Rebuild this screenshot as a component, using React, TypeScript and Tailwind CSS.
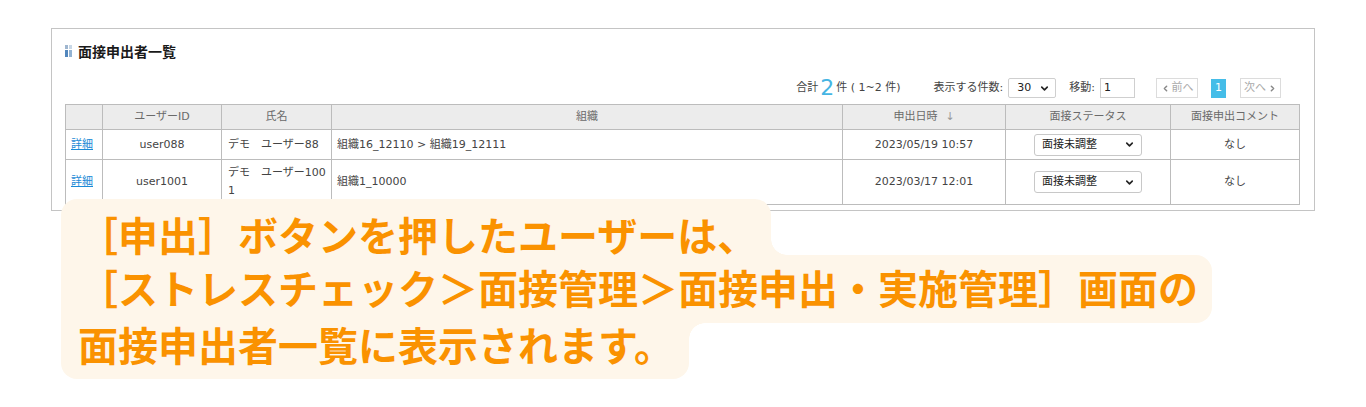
import { ChevronDown, ChevronLeft, ChevronRight } from 'lucide-react';

const rows = [
  { id: 'user088', name: 'デモ　ユーザー88', org: '組織16_12110 > 組織19_12111', date: '2023/05/19 10:57', h: 'h-[30px]' },
  { id: 'user1001', name: 'デモ　ユーザー1001', org: '組織1_10000', date: '2023/03/17 12:01', h: 'h-[44px]' },
];

const heads = ['', 'ユーザーID', '氏名', '組織', '申出日時', '面接ステータス', '面接申出コメント'];
const widths = ['w-[37px]', 'w-[119px]', 'w-[110px]', 'w-[511px]', 'w-[163px]', 'w-[165px]', 'w-[129px]'];

function StatusSelect() {
  return (
    <div className="mx-auto flex h-[22px] w-[108px] items-center justify-between rounded-[3px] border border-[#c8c8c8] bg-white pl-[7px] pr-[6px] text-[11px] text-[#222]">
      <span>面接未調整</span>
      <ChevronDown size={11} strokeWidth={3.5} className="text-[#222]" />
    </div>
  );
}

export default function App() {
  return (
    <div className="h-[407px] w-[1366px] overflow-hidden bg-white pl-[51px] pt-[28px] font-['Noto_Sans_CJK_JP',sans-serif]">
      <div className="w-[1264px] border border-[#c4c4c4] pb-[5px] pl-[13px] pr-[15px] pt-[12px]">
        <div className="flex h-[20px] items-center gap-[6px]">
          <div className="flex gap-[1px]">
            <div className="flex flex-col gap-[1px]">
              <div className="h-[4px] w-[3px] bg-[#9fb6cf]" />
              <div className="h-[7px] w-[3px] bg-[#5287bd]" />
            </div>
            <div className="flex flex-col gap-[1px]">
              <div className="h-[4px] w-[3px] bg-[#c9d8e7]" />
              <div className="h-[7px] w-[3px] bg-[#93b3d2]" />
            </div>
          </div>
          <h2 className="text-[14px] font-bold text-[#1a1a1a]">面接申出者一覧</h2>
        </div>

        <div className="font-['DejaVu_Sans','Noto_Sans_CJK_JP',sans-serif]">
          <div className="mt-[17px] flex h-[20px] w-[1234px] items-center justify-end pr-[18px] text-[11px] text-[#444]">
            <span className="flex items-center whitespace-pre">
              合計<span className="mx-[2px] text-[22px] leading-none text-[#45b5e3]">2</span>件 ( 1~2 件)
            </span>
            <span className="ml-[33px]">表示する件数:</span>
            <div className="ml-[5px] flex h-[20px] w-[48px] items-center justify-between rounded-[2px] border border-[#cfcfcf] pl-[8px] pr-[5px] text-[#222]">
              <span>30</span>
              <ChevronDown size={11} strokeWidth={3.5} />
            </div>
            <span className="ml-[13px]">移動:</span>
            <div className="ml-[5px] flex h-[20px] w-[35px] items-center border border-[#cfcfcf] pl-[3px] text-[#222]">1</div>
            <div className="ml-[21px] flex h-[20px] w-[42px] items-center justify-center gap-[2px] border border-[#dcdcdc] text-[#aaa]">
              <ChevronLeft size={9} strokeWidth={4} className="text-[#888]" />
              前へ
            </div>
            <div className="ml-[13px] flex h-[19px] w-[15px] items-center justify-center bg-[#45bde8] text-white">1</div>
            <div className="ml-[14px] flex h-[20px] w-[41px] items-center justify-center gap-[2px] border border-[#dcdcdc] text-[#aaa]">
              次へ
              <ChevronRight size={9} strokeWidth={4} className="text-[#888]" />
            </div>
          </div>

          <table className="mt-[6px] w-[1234px] table-fixed border-collapse text-[11px] leading-[18px]">
            <thead>
              <tr className="h-[25px] bg-[#ececec]">
                {heads.map((h, i) => (
                  <th key={i} className={`${widths[i]} border border-[#bcbcbc] font-normal text-[#6a6a6a]`}>
                    {h}
                    {h === '申出日時' && <span className="ml-[8px] text-[#999]">↓</span>}
                  </th>
                ))}
              </tr>
            </thead>
            <tbody className="text-[#444]">
              {rows.map((r) => (
                <tr key={r.id} className={r.h}>
                  <td className="border border-[#bcbcbc] pl-[5px]">
                    <a className="text-[#1b8ad6] underline">詳細</a>
                  </td>
                  <td className="border border-[#bcbcbc] text-center">{r.id}</td>
                  <td className="break-all border border-[#bcbcbc] py-[4px] pl-[6px] pr-[4px]">{r.name}</td>
                  <td className="border border-[#bcbcbc] pl-[5px]">{r.org}</td>
                  <td className="border border-[#bcbcbc] text-center">{r.date}</td>
                  <td className="border border-[#bcbcbc]">
                    <StatusSelect />
                  </td>
                  <td className="border border-[#bcbcbc] text-center">なし</td>
                </tr>
              ))}
            </tbody>
          </table>
        </div>
      </div>

      <div className="relative -mt-[12px] ml-[10px] flex flex-col items-start text-[40px] font-bold leading-[40px] text-[#fa9200]">
        <div className="relative rounded-t-[16px] bg-[#fef6ea] pb-[1px] pl-[17px] pr-[14px] pt-[15px] after:absolute after:bottom-0 after:left-full after:h-[16px] after:w-[16px] after:bg-[radial-gradient(circle_at_100%_0,transparent_15.5px,#fef6ea_16px)] after:content-['']">
          ［申出］ボタンを押したユーザーは、
        </div>
        <div className="rounded-r-[16px] bg-[#fef6ea] pb-[16px] pl-[17px] pr-[14px] pt-[12px]">
          ［ストレスチェック＞面接管理＞面接申出・実施管理］画面の
        </div>
        <div className="relative rounded-b-[16px] bg-[#fef6ea] pb-[15px] pl-[17px] pr-[15px] pt-[1px] after:absolute after:left-full after:top-0 after:h-[16px] after:w-[16px] after:bg-[radial-gradient(circle_at_100%_100%,transparent_15.5px,#fef6ea_16px)] after:content-['']">
          面接申出者一覧に表示されます。
        </div>
      </div>
    </div>
  );
}
